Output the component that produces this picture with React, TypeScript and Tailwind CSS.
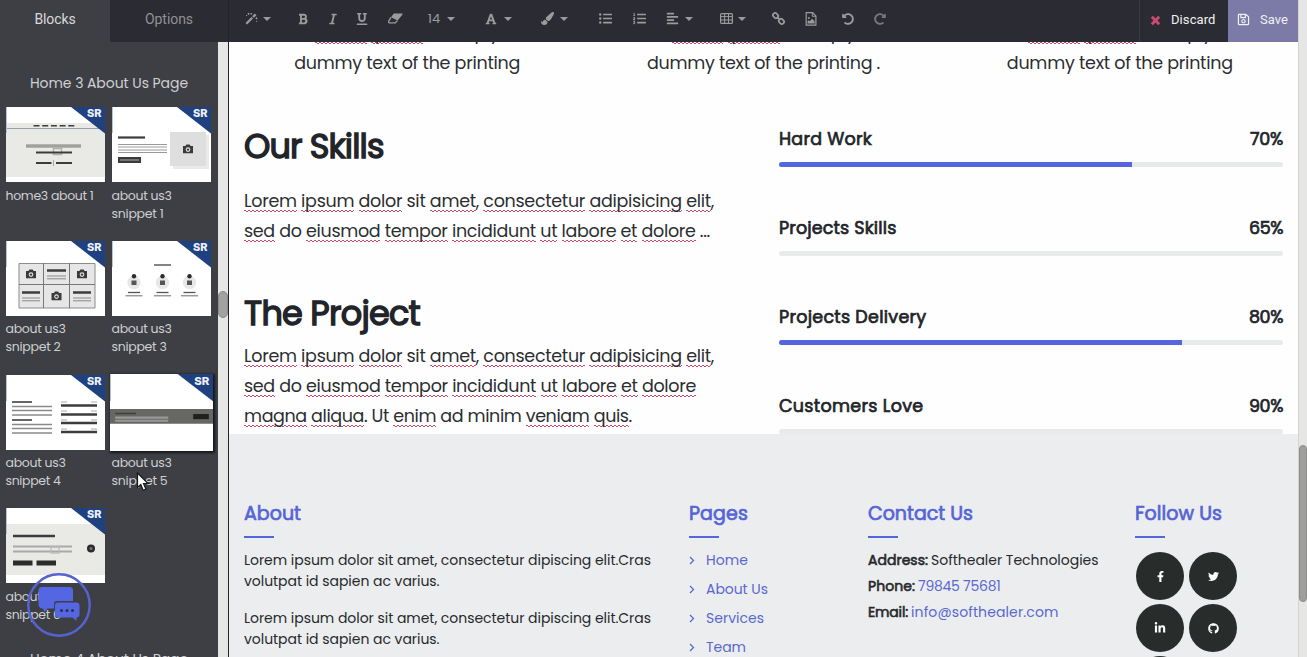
import { useLayoutEffect, useRef, useState } from "react";
import type { ReactNode } from "react";
import {
  FaAlignLeft,
  FaBold,
  FaFacebookF,
  FaFont,
  FaGithub,
  FaItalic,
  FaLinkedinIn,
  FaListOl,
  FaListUl,
  FaPaintBrush,
  FaRedoAlt,
  FaRegSave,
  FaTwitter,
  FaUnderline,
  FaUndoAlt,
} from "react-icons/fa";

/* Spreads the letters of one line so that it fills the given measure. */
function Fit({ w, className = "", children }: { w: number; className?: string; children: ReactNode }) {
  const ref = useRef<HTMLSpanElement>(null);
  const [spacing, setSpacing] = useState(0);
  useLayoutEffect(() => {
    const el = ref.current;
    if (!el) return;
    const count = (el.textContent || "").length;
    if (count > 0) setSpacing((w - el.getBoundingClientRect().width) / count);
  }, [w]);
  return (
    <span ref={ref} className={`inline-block whitespace-pre ${className}`} style={{ letterSpacing: `${spacing}px` }}>
      {children}
    </span>
  );
}

const KNOWN = new Set(["sit", "do", "ad", "minim", "Ut", "...", "is", "simply"]);

function Checked({ w, text }: { w: number; text: string }) {
  return (
    <Fit w={w}>
      {text.split(" ").map((word, i) => {
        const bare = word === "..." ? word : word.replace(/[.,]$/, "");
        const tail = word.slice(bare.length);
        return (
          <span key={i}>
            {i > 0 ? " " : ""}
            {KNOWN.has(bare) ? (
              bare
            ) : (
              <span className="bg-[linear-gradient(90deg,#cf4a68_50%,transparent_50%),linear-gradient(90deg,transparent_50%,#cf4a68_50%)] bg-[length:4px_1px] bg-[position:0_calc(100%_-_2px),0_calc(100%_-_1px)] bg-repeat-x">
                {bare}
              </span>
            )}
            {tail}
          </span>
        );
      })}
    </Fit>
  );
}

function Tool({ className, children }: { className: string; children: ReactNode }) {
  return <div className={`flex h-[37px] w-4 shrink-0 items-center justify-center ${className}`}>{children}</div>;
}

function Caret({ className }: { className: string }) {
  return (
    <div className={`flex h-[37px] w-2.5 shrink-0 items-center justify-center ${className}`}>
      <svg width="8" height="4" viewBox="0 0 8 4">
        <path d="M0 0h8L4 4z" fill="currentColor" />
      </svg>
    </div>
  );
}

function WandIcon() {
  return (
    <svg width="13" height="13" viewBox="0 0 13 13" fill="none" stroke="currentColor">
      <path d="M1.300 11.700L7.200 5.800" strokeWidth="2.300" />
      <path d="M8 5L10.600 2.400" strokeWidth="2.300" />
      <path d="M3.500 0.800v2M2.500 1.800h2M6.300 1v1.600M5.500 1.800h1.600M11.500 5.300v2M10.500 6.300h2M1 3.500h1.200M11 9.300h1.200" strokeWidth="0.900" />
    </svg>
  );
}

function EraserIcon() {
  return (
    <svg width="15" height="11" viewBox="0 0 15 11">
      <path d="M5.800 0.500H14a0.600 0.600 0 0 1 0.500 1L9.600 7.600 3 4.200z" fill="currentColor" />
      <path d="M3 4.300L0.900 7.900Q0 9.700 1.500 9.800H7.400L9.400 7.600" fill="none" stroke="currentColor" strokeWidth="1.300" />
    </svg>
  );
}

function TableIcon() {
  return (
    <svg width="13" height="11" viewBox="0 0 13 11" fill="none" stroke="currentColor">
      <rect x="0.6" y="0.6" width="11.8" height="9.8" rx="1" strokeWidth="1.2" />
      <path d="M0.500 3.600h12M0.500 7h12M4.600 1v9.500M8.500 1v9.500" />
    </svg>
  );
}

function ChainIcon() {
  return (
    <svg width="13" height="13" viewBox="0 0 13 13" fill="none" stroke="currentColor" strokeWidth="1.7">
      <rect x="-2.7" y="-2.1" width="5.4" height="4.2" rx="1.7" transform="translate(3.6 3.6) rotate(45)" />
      <rect x="-2.7" y="-2.1" width="5.4" height="4.2" rx="1.7" transform="translate(9.4 9.4) rotate(45)" />
      <path d="M4.800 4.800l3.400 3.400" />
    </svg>
  );
}

function FilePictureIcon() {
  return (
    <svg width="12" height="14" viewBox="0 0 12 14" fill="none" stroke="currentColor">
      <path d="M1.200 0.700H7.600L10.900 4V13.200H1.200z" strokeWidth="1.200" />
      <path d="M7.300 1v3.300h3.400" />
      <circle cx="3.800" cy="6" r="1" fill="currentColor" stroke="none" />
      <path d="M2.500 11.400V9.600l1.300-1.300 1 1L7.200 6.800l2.400 2.400v2.200z" fill="currentColor" stroke="none" />
    </svg>
  );
}

function Toolbar() {
  return (
    <div className="flex flex-1 items-start text-[#9b9b9e]">
      <Tool className="ml-[14px]"><WandIcon /></Tool>
      <Caret className="ml-[3px]" />
      <Tool className="ml-[23px]"><FaBold size={12} /></Tool>
      <Tool className="ml-[14px]"><FaItalic size={12} /></Tool>
      <Tool className="ml-[13px]"><FaUnderline size={12} /></Tool>
      <Tool className="ml-[17px]"><EraserIcon /></Tool>
      <Tool className="ml-[23px] font-['Poppins','Inter',sans-serif] text-[13px]">14</Tool>
      <Caret className="ml-1" />
      <Tool className="ml-[27px]"><FaFont size={12} /></Tool>
      <Caret className="ml-1" />
      <Tool className="ml-[26px]"><FaPaintBrush size={13} /></Tool>
      <Caret className="ml-1" />
      <Tool className="ml-[28px]"><FaListUl size={13} /></Tool>
      <Tool className="ml-[18px]"><FaListOl size={13} /></Tool>
      <Tool className="ml-[17px]"><FaAlignLeft size={13} /></Tool>
      <Caret className="ml-1" />
      <Tool className="ml-[24px]"><TableIcon /></Tool>
      <Caret className="ml-[3px]" />
      <Tool className="ml-[23px]"><ChainIcon /></Tool>
      <Tool className="ml-[17px]"><FilePictureIcon /></Tool>
      <Tool className="ml-[21px]"><FaUndoAlt size={12} /></Tool>
      <Tool className="ml-4 text-[#77777b]"><FaRedoAlt size={12} /></Tool>
    </div>
  );
}

function Camera({ x, y, fill = "#3a3a3a" }: { x: number; y: number; fill?: string }) {
  return (
    <g transform={`translate(${x} ${y})`}>
      <path d="M-5 -3h2.400l1-1.600h3.200l1 1.600H5v7.200H-5z" fill={fill} />
      <circle r="2.3" cy="0.6" fill="#e6e6e6" />
      <circle r="1.2" cy="0.6" fill={fill} />
    </g>
  );
}

function Thumb({ children }: { children: ReactNode }) {
  return (
    <svg viewBox="0 0 99 75" preserveAspectRatio="none" className="block h-full w-full bg-white">
      {children}
      <path d="M65 0H99V26.500z" fill="#1f4180" />
      <path d="M0.500 0V26" stroke="#b5c3dc" />
      <text x="81" y="10.300" fontFamily="Inter, sans-serif" fontWeight="800" fontSize="10.500" textLength="14.500" lengthAdjust="spacingAndGlyphs" fill="#eef1f7">
        SR
      </text>
    </svg>
  );
}

const D = "#3c3c3c";
const G = "#a9a9a9";

const blocks: { name: string[]; widths: number[]; art: ReactNode; active?: boolean }[] = [
  {
    name: ["home3 about 1"],
    widths: [88],
    art: (
      <>
        <path d="M0 16h99v54H0z" fill="#e9e9e6" />
        <path d="M0 21.500h99" stroke="#9a9fae" />
        <path d="M27.500 18.800h41.500" stroke={D} strokeWidth="1.400" strokeDasharray="6 2.700" />
        <path d="M20 39h55" stroke="#a0a09c" strokeWidth="3.400" />
        <rect x="47.500" y="41.500" width="8" height="6" fill="none" stroke="#b0b0b0" strokeWidth="1.500" />
        <path d="M30 45.500h36" stroke={D} strokeWidth="2" />
        <path d="M30 56h15.500M50 56h16" stroke={D} strokeWidth="2" />
        <path d="M47.500 53v6" stroke={G} />
      </>
    ),
  },
  {
    name: ["about us3", "snippet 1"],
    widths: [60, 52],
    art: (
      <>
        <path d="M6 30.500h27" stroke={D} strokeWidth="2.200" />
        <path d="M6 37.500h49M6 40h49M6 43h49M6 45.500h49" stroke="#999" />
        <rect x="6" y="50" width="23" height="6" fill={D} />
        <path d="M8 53h19" stroke="#aaa" />
        <rect x="61" y="28" width="36" height="34" fill="#eaeaea" />
        <rect x="58" y="25" width="36" height="34" fill="#dedede" />
        <Camera x={76} y={42} />
      </>
    ),
  },
  {
    name: ["about us3", "snippet 2"],
    widths: [60, 55],
    art: (
      <>
        <path d="M13 22.500h76v44.500H13z" fill="#e6e6e6" stroke="#8c8c8c" />
        <path d="M13 43.500h76M37.500 22v45M63.500 22v45" stroke="#777" />
        <Camera x={25} y={33} />
        <Camera x={76} y={33} />
        <Camera x={50.5} y={55} />
        <path d="M41 29.500h19M16 51.500h18M67 51.500h18" stroke={D} strokeWidth="2.500" />
        <path d="M41 35h19M41 37.800h19M16 57h18M16 59.800h18M67 57h18M67 59.800h18" stroke="#888" />
      </>
    ),
  },
  {
    name: ["about us3", "snippet 3"],
    widths: [60, 55],
    art: (
      <>
        <path d="M42 24h17" stroke="#777" strokeWidth="1.800" />
        {[22, 50.5, 77.5].map((x) => (
          <g key={x}>
            <circle cx={x} cy="41.500" r="6.700" fill="#e7e7e7" />
            <circle cx={x} cy="35.200" r="2.200" fill="#2c2c2c" />
            <rect x={x - 2.5} y="39.500" width="5" height="4.500" fill="#555" />
            <path d={`M${x - 6} 51.500h12`} stroke="#555" strokeWidth="1.300" />
            <path d={`M${x - 8.5} 54.700h17`} stroke="#999" strokeWidth="1.500" />
          </g>
        ))}
      </>
    ),
  },
  {
    name: ["about us3", "snippet 4"],
    widths: [60, 55],
    art: (
      <>
        <path d="M6 27h20M6 45h20" stroke="#666" strokeWidth="1.800" />
        <path d="M6 31.500h40M6 35.500h40M6 40h40M6 49.500h40M6 53.500h40M6 58h40" stroke="#8a8a8a" strokeWidth="1.300" />
        <path d="M55 27h6M85 27h6M55 36h6M85 36h6M55 45h6M85 45h6M55 54h6M85 54h6" stroke="#aaa" />
        <path d="M55 30.500h36M55 39.500h36M55 48h36M55 57h36" stroke={D} strokeWidth="2.500" />
      </>
    ),
  },
  {
    name: ["about us3", "snippet 5"],
    widths: [60, 56],
    active: true,
    art: (
      <>
        <path d="M0 34h99v14.500H0z" fill="#676866" />
        <path d="M5 38.500h20" stroke="#3f3f3f" strokeWidth="1.500" />
        <path d="M5 42.500h51M5 45.500h51" stroke="#999" strokeWidth="2" />
        <rect x="80" y="39" width="15" height="5" fill="#202020" />
      </>
    ),
  },
  {
    name: ["about us3", "snippet 6"],
    widths: [60, 55],
    art: (
      <>
        <path d="M0 16h99v51H0z" fill="#e9e9e6" />
        <path d="M7 28h42" stroke={D} strokeWidth="2.500" />
        <path d="M7 38.500h59M7 43.500h59" stroke={G} strokeWidth="2" />
        <rect x="45" y="39" width="8" height="6" fill="none" stroke="#bbb" strokeWidth="1.300" />
        <circle cx="85" cy="40.500" r="4" fill="#2c2c2c" />
        <circle cx="85" cy="40.500" r="1.500" fill="#777" />
        <path d="M7 55h19.500M30.500 55H50" stroke="#2c2c2c" strokeWidth="5" />
      </>
    ),
  },
];

function Sidebar() {
  return (
    <aside className="relative flex w-[229px] shrink-0 overflow-hidden border-r border-[#24242c] bg-[#3d3f45] text-[#cfd0d1]">
      <div className="w-[218px] shrink-0">
        <div className="-mt-[17px] pl-1.5 text-[13px] leading-[18px]">p</div>
        <h3 className="mt-[30px] h-5 text-center text-[14px] leading-5">
          <Fit w={158}>Home 3 About Us Page</Fit>
        </h3>
        <div className="mt-[14px] grid grid-cols-[99px_99px] gap-x-[7px] pl-1.5">
          {blocks.map((b, i) => (
            <div key={i} className="h-[133.8px]">
              <div className="flex h-[75px] items-center justify-center">
                <div
                  className={
                    b.active
                      ? "h-[77px] w-[103px] shrink-0 shadow-[1px_1px_2px_1px_#17181b]"
                      : "h-[75px] w-[99px] shrink-0"
                  }
                >
                  <Thumb>{b.art}</Thumb>
                </div>
              </div>
              <div className="-ml-[0.5px] pt-[4.6px] text-[12.5px] leading-[18px]">
                {b.name.map((line, j) => (
                  <div key={j} className="h-[18px]">
                    <Fit w={b.widths[j]}>{line}</Fit>
                  </div>
                ))}
              </div>
            </div>
          ))}
        </div>
        <h3 className="mt-[6.8px] h-5 text-center text-[14px] leading-5">
          <Fit w={158}>Home 4 About Us Page</Fit>
        </h3>
      </div>
      <div className="w-2.5 shrink-0 bg-[#e6e6e4] pt-[249px]">
        <div className="h-[27px] rounded-full border border-[#8c8c8a] bg-[#a2a2a0]" />
      </div>

      <svg className="absolute left-[27px] top-[531px]" width="64" height="64" viewBox="0 0 64 64">
        <circle cx="32" cy="32" r="30.700" fill="none" stroke="#5663cf" strokeWidth="2.500" />
        <path d="M15 14H42.500a3.500 3.500 0 0 1 3.500 3.500V28H30a3 3 0 0 0-3 3v4.500h-6.500L17.500 39l-1.500-3.500a4 4 0 0 1-4.500-4V17.500A3.500 3.500 0 0 1 15 14z" fill="#5566e2" />
        <path d="M31 29.500h18.500a3 3 0 0 1 3 3V41.500a3 3 0 0 1-3 3V48l-4-3.500H31a3 3 0 0 1-3-3v-9a3 3 0 0 1 3-3z" fill="#5566e2" />
        <g fill="#2d3048">
          <circle cx="34.500" cy="37.500" r="1.500" />
          <circle cx="40" cy="37.500" r="1.500" />
          <circle cx="45.500" cy="37.500" r="1.500" />
        </g>
      </svg>
      <svg className="absolute left-[136px] top-[430px]" width="14" height="20" viewBox="0 0 14 20">
        <path d="M1.500 1v14.500l3.300-3 2.400 5.700 2.700-1.200-2.400-5.500h4.500z" fill="#fff" stroke="#17181b" strokeWidth="1.200" />
      </svg>
    </aside>
  );
}

const skills = [
  { name: "Hard Work", w: 93, value: "70%", vw: 33, fill: 70 },
  { name: "Projects Skills", w: 117.5, value: "65%", vw: 34, fill: 0 },
  { name: "Projects Delivery", w: 147.5, value: "80%", vw: 34, fill: 80 },
  { name: "Customers Love", w: 144.5, value: "90%", vw: 34, fill: 0 },
];

function Body() {
  return (
    <section className="h-[392px] shrink-0 overflow-hidden bg-[#fefefe] text-[17.5px] leading-[30px] text-[#2b2e31]">
      <div className="-mt-6 grid grid-cols-3 text-center">
        {[226, 233, 226].map((w, i) => (
          <div key={i}>
            <div className="h-[30px]">
              <Checked w={184} text="Lorem ipsum is simply" />
            </div>
            <div className="h-[30px]">
              <Fit w={w}>{i === 1 ? "dummy text of the printing ." : "dummy text of the printing"}</Fit>
            </div>
          </div>
        ))}
      </div>
      <div className="flex justify-between pl-[15px] pr-[15px] pt-[46px]">
        <div>
          <h2 className="h-11 text-[33.5px] leading-[45px] text-[#212429] [-webkit-text-stroke:1.4px_#212429]">
            <Fit w={139.5}>Our Skills</Fit>
          </h2>
          <div className="mt-[18px]">
            <div className="h-[30px]"><Checked w={470} text="Lorem ipsum dolor sit amet, consectetur adipisicing elit," /></div>
            <div className="h-[30px]"><Checked w={466} text="sed do eiusmod tempor incididunt ut labore et dolore ..." /></div>
          </div>
          <h2 className="mt-[45px] h-11 text-[33.5px] leading-[45px] text-[#212429] [-webkit-text-stroke:1.4px_#212429]">
            <Fit w={176}>The Project</Fit>
          </h2>
          <div className="mt-1.5">
            <div className="h-[30px]"><Checked w={470} text="Lorem ipsum dolor sit amet, consectetur adipisicing elit," /></div>
            <div className="h-[30px]"><Checked w={452} text="sed do eiusmod tempor incididunt ut labore et dolore" /></div>
            <div className="h-[30px]"><Checked w={388} text="magna aliqua. Ut enim ad minim veniam quis." /></div>
          </div>
        </div>
        <div className="w-[504px]">
          {skills.map((s) => (
            <div key={s.name} className="h-[89px]">
              <div className="flex h-[30px] justify-between leading-[31px] text-[#212429] [-webkit-text-stroke:0.7px_#212429]">
                <Fit w={s.w}>{s.name}</Fit>
                <Fit w={s.vw}>{s.value}</Fit>
              </div>
              <div className="mt-2 h-[5px] overflow-hidden rounded-sm bg-[#e9eaeb]">
                <div className="h-full bg-[#5565dd]" style={{ width: `${s.fill}%` }} />
              </div>
            </div>
          ))}
        </div>
      </div>
    </section>
  );
}

function FootTitle({ w, children }: { w: number; children: ReactNode }) {
  return (
    <>
      <h4 className="h-[30px] text-[19px] leading-[30px] text-[#5565d6] [-webkit-text-stroke:0.7px_#5565d6]">
        <Fit w={w}>{children}</Fit>
      </h4>
      <div className="mt-[7px] h-0.5 w-[30px] bg-[#5565dd]" />
    </>
  );
}

function Label({ w, children }: { w: number; children: ReactNode }) {
  return (
    <Fit w={w} className="text-[#26292c] [-webkit-text-stroke:0.6px_#26292c]">
      {children}
    </Fit>
  );
}

function Social({ children }: { children: ReactNode }) {
  return <div className="flex size-12 items-center justify-center rounded-full bg-[#282d2c] text-white">{children}</div>;
}

function Footer() {
  return (
    <footer className="flex flex-1 overflow-hidden bg-[#ecedef] pl-[15px] pt-[65px] text-[14px] leading-[21px] text-[#26292c]">
      <div className="w-[445px] shrink-0">
        <FootTitle w={57}>About</FootTitle>
        <div className="mt-[12px]">
          {[0, 1].map((i) => (
            <div key={i} className="mb-4 h-[42px]">
              <div className="h-[21px]"><Fit w={407}>Lorem ipsum dolor sit amet, consectetur dipiscing elit.Cras</Fit></div>
              <div className="h-[21px]"><Fit w={195.5}>volutpat id sapien ac varius.</Fit></div>
            </div>
          ))}
        </div>
      </div>
      <div className="w-[179px] shrink-0">
        <FootTitle w={59}>Pages</FootTitle>
        <ul className="mt-[12px] text-[#5a68cf]">
          {[
            { t: "Home", w: 42 },
            { t: "About Us", w: 62 },
            { t: "Services", w: 58 },
            { t: "Team", w: 40 },
          ].map((l) => (
            <li key={l.t} className="flex h-[29px] items-start">
              <svg width="17" height="21" viewBox="0 0 17 21" fill="none" stroke="currentColor" strokeWidth="1.300">
                <path d="M1 7l3.500 3.500L1 14" />
              </svg>
              <Fit w={l.w}>{l.t}</Fit>
            </li>
          ))}
        </ul>
      </div>
      <div className="w-[267px] shrink-0">
        <FootTitle w={105}>Contact Us</FootTitle>
        <div className="mt-[12px]">
          <div className="flex h-[26px] gap-[3px]">
            <Label w={60}>Address:</Label>
            <Fit w={167.5}>Softhealer Technologies</Fit>
          </div>
          <div className="flex h-[26px] gap-[3px]">
            <Label w={47}>Phone:</Label>
            <Fit w={82.5} className="text-[#5a68cf]">79845 75681</Fit>
          </div>
          <div className="flex h-[26px] gap-[3px]">
            <Label w={40}>Email:</Label>
            <Fit w={147.5} className="text-[#5a68cf]">info@softhealer.com</Fit>
          </div>
        </div>
      </div>
      <div className="shrink-0">
        <FootTitle w={87}>Follow Us</FootTitle>
        <div className="mt-[14px] grid grid-cols-[48px_48px] gap-x-[5px] gap-y-1 pl-px">
          <Social><FaFacebookF size={11} /></Social>
          <Social><FaTwitter size={11} /></Social>
          <Social><FaLinkedinIn size={12} /></Social>
          <Social><FaGithub size={11} /></Social>
          <Social>{null}</Social>
        </div>
      </div>
    </footer>
  );
}

export default function App() {
  return (
    <div className="flex h-[657px] w-[1307px] overflow-hidden bg-[#fefefe] font-['Poppins','Inter',sans-serif]">
      <div className="flex w-[1298px] shrink-0 flex-col">
        <header className="flex h-[42px] shrink-0 bg-[#2b2b33] font-['Roboto',sans-serif]">
          <div className="flex h-full w-[110px] items-center justify-center bg-[#3d3f45] pb-[3px] text-[14px] text-[#d9d9da]">
            <Fit w={41}>Blocks</Fit>
          </div>
          <div className="flex h-full w-[119px] items-center justify-center border-r border-[#222229] pb-[3px] text-[14px] text-[#919194]">
            <Fit w={48}>Options</Fit>
          </div>
          <Toolbar />
          <div className="flex h-full w-[89px] items-center border-l border-[#3a3a42] pb-[3px] pl-[10px] text-[13px] text-[#f0f0f0]">
            <svg width="11" height="11" viewBox="0 0 11 11" className="mr-2.5 mt-0.5">
              <path d="M1.800 1.800l7.400 7.400M9.200 1.800L1.800 9.200" stroke="#c84d6c" strokeWidth="2.900" />
            </svg>
            <Fit w={44.5}>Discard</Fit>
          </div>
          <div className="flex h-full w-[70px] items-center bg-[#7c7ba8] pb-[3px] pl-[9px] text-[13px] text-[#f0f0f4]">
            <FaRegSave size={13} className="mr-2.5" />
            <Fit w={28}>Save</Fit>
          </div>
        </header>
        <div className="flex min-h-0 flex-1">
          <Sidebar />
          <main className="flex min-w-0 flex-1 flex-col overflow-hidden">
            <Body />
            <Footer />
          </main>
        </div>
      </div>
      <div className="w-[9px] shrink-0 border-l border-[#d4d4d2] bg-[#e6e6e4] pt-[445px]">
        <div className="h-[157px] rounded-full border border-[#8c8c8a] bg-[#9f9f9d]" />
      </div>
    </div>
  );
}
